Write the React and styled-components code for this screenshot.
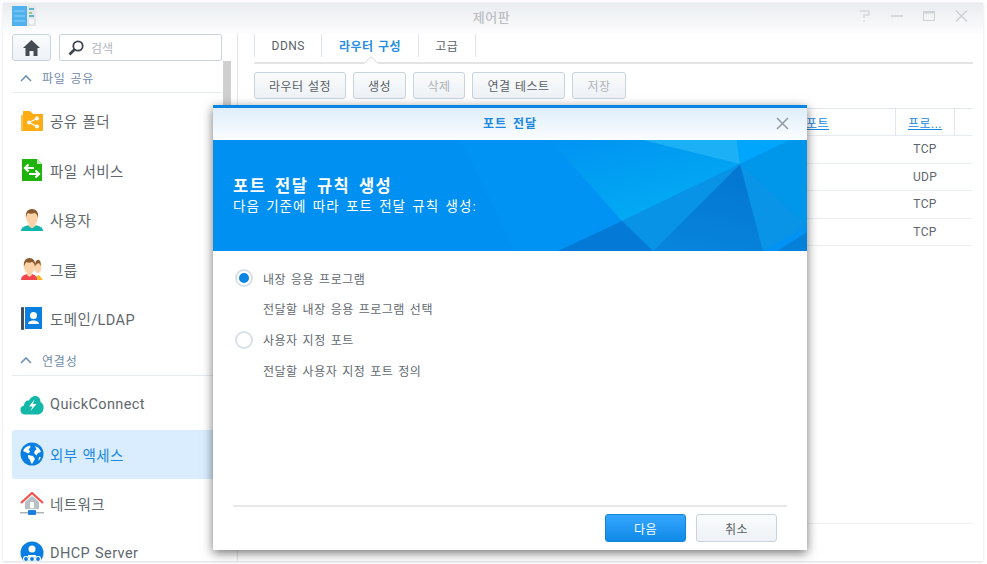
import styled, { createGlobalStyle } from "styled-components";

const GlobalStyle = createGlobalStyle`
  html, body {
    margin: 0;
    padding: 0;
    background: #fff;
  }
  * {
    box-sizing: border-box;
  }
  body {
    font-family: Roboto, "Noto Sans CJK KR", sans-serif;
  }
`;

const FolderIcon = () => (
  <svg width="24" height="22" viewBox="0 0 24 22">
    <path d="M1 5h2v16H1z" fill="#fbc04a" />
    <path d="M3 1h7l3 3h10v16a1 1 0 0 1-1 1H3z" fill="#fdad14" />
    <circle cx="9" cy="12.5" r="2" fill="#fff" />
    <circle cx="17" cy="8.5" r="2" fill="#fff" />
    <circle cx="17" cy="16.5" r="2" fill="#fff" />
    <path d="M9 12.5l8-4M9 12.5l8 4" stroke="#fff" strokeWidth="1.3" />
  </svg>
);

const FileIcon = () => (
  <svg width="24" height="22" viewBox="0 0 24 22">
    <path d="M2 0h15l5 5v17H2z" fill="#1eb30d" />
    <path d="M17 0l5 5h-5z" fill="#c7ecc2" />
    <path d="M5 9h9M8.5 5.5L5 9l3.5 3.5" fill="none" stroke="#fff" strokeWidth="2.2" />
    <path d="M9 15h10M15.500 11.500L19 15l-3.500 3.500" fill="none" stroke="#fff" strokeWidth="2.2" />
  </svg>
);

const UserIcon = () => (
  <svg width="24" height="24" viewBox="0 0 24 24">
    <path d="M1 23c0-4 4-5 8-6h6c4 1 8 2 8 6z" fill="#12b4ab" />
    <path d="M8.500 14h7v4l-3.500 2.500L8.500 18z" fill="#fcd3a8" />
    <ellipse cx="12" cy="9.500" rx="6" ry="7.500" fill="#fcd3a8" />
    <path d="M6 10C5 4 8 1 12 1s7 3 6 9c-.5-3-2-4.500-3.500-5-2 1-5.500 1-6.500 0-1 1-1.700 2.500-2 5z" fill="#8b5a2e" />
  </svg>
);

const GroupIcon = () => (
  <svg width="24" height="24" viewBox="0 0 24 24">
    <path d="M14 23c1-3 3-4 5-5l4 5z" fill="#fdb52c" />
    <ellipse cx="18" cy="10" rx="3.500" ry="6" fill="#fcd3a8" />
    <path d="M15 9c0-5 2-7 4-6 2 1 2 4 1.500 6-.5-1.500-1-2.500-2-3-1 .5-2.500 1.500-3.500 3z" fill="#8b5a2e" />
    <path d="M1 23c0-4 3-5 6-6h5c3 1 5 2 5 6z" fill="#f2454d" />
    <path d="M7 14h5v4l-2.500 2L7 18z" fill="#fcd3a8" />
    <ellipse cx="9.500" cy="9.500" rx="5.500" ry="7.500" fill="#fcd3a8" />
    <path d="M4 10C3 4 6 1 9.500 1S16 4 15 10c-.5-3-1.500-4.500-3-5-2 1-4 1-5.500 0-1 1-2 2.500-2.500 5z" fill="#8b5a2e" />
  </svg>
);

const DomainIcon = () => (
  <svg width="24" height="23" viewBox="0 0 24 23">
    <rect x="1" y="0" width="3" height="23" rx="1" fill="#454e59" />
    <rect x="5" y="0" width="17" height="22" fill="#0a7fdf" />
    <circle cx="13.500" cy="8.500" r="3.500" fill="#fff" />
    <path d="M8 17c0-2.500 2.500-3 4-3.500h3c1.500.5 4 1 4 3.500z" fill="#fff" />
  </svg>
);

const CloudIcon = () => (
  <svg width="24" height="20" viewBox="0 0 24 20">
    <path
      d="M5 19.500a4.500 4.500 0 0 1-1-8.900C4.500 6 7 5 9 5.500 10.500 2 13.500.5 16 1c3 .5 4.500 3 4.500 6 2.500 1.500 3.500 4 3 7-.5 3-3 5.500-6 5.500z"
      fill="#14b8a9"
    />
    <path d="M14.500 4.500L9 11.500h3.500L10.500 16l6-7h-3.500z" fill="#fff" />
  </svg>
);

const GlobeIcon = () => (
  <svg width="24" height="24" viewBox="0 0 24 24">
    <circle cx="12" cy="12" r="11.500" fill="#0a7fe3" />
    <path d="M3 9c1-3 4-5 7-5.500 1 1.500 0 3-1.500 3.500L10 9.500l-1.500 2L5 10z" fill="#fff" />
    <path d="M8 13l5 1 2 3-3 5c-1.500-1-1.500-3-2-4-1.500-1-2-3-2-5z" fill="#fff" />
    <path d="M15 4c3 1 5 3 6 6l-3 1-1.500 2.500L14 11l1-2.500 1.500-1z" fill="#fff" />
    <path d="M19 15l2 .5-2.500 3.500z" fill="#fff" />
  </svg>
);

const NetworkIcon = () => (
  <svg width="24" height="24" viewBox="0 0 24 24">
    <path d="M5 10l7-6 7 6v7H5z" fill="#b7bfc7" />
    <path d="M1 11l11-10 11 10" fill="none" stroke="#f4504e" strokeWidth="2.200" />
    <rect x="10" y="10" width="4" height="6" fill="#fff" />
    <rect x="0" y="20" width="24" height="1.500" fill="#aab4bd" />
    <rect x="8" y="18" width="8" height="5" rx="1" fill="#1a7fdc" />
  </svg>
);

const DhcpIcon = () => (
  <svg width="24" height="24" viewBox="0 0 24 24">
    <circle cx="12" cy="12" r="11.500" fill="#0a7fe3" />
    <circle cx="12" cy="8" r="3.500" fill="#fff" />
    <path d="M8 14h8v2H8z" fill="#fff" />
    <circle cx="6" cy="18" r="2.500" fill="none" stroke="#fff" strokeWidth="1.200" />
    <circle cx="12" cy="18" r="2.500" fill="none" stroke="#fff" strokeWidth="1.200" />
    <circle cx="18" cy="18" r="2.500" fill="none" stroke="#fff" strokeWidth="1.200" />
  </svg>
);

const Chevron = () => (
  <svg width="12" height="8" viewBox="0 0 12 8">
    <path d="M1 7l5-5 5 5" fill="none" stroke="#6f93b3" strokeWidth="1.600" />
  </svg>
);

const sections = [
  {
    title: "파일 공유",
    pad: 3,
    items: [
      { label: "공유 폴더", icon: <FolderIcon /> },
      { label: "파일 서비스", icon: <FileIcon /> },
      { label: "사용자", icon: <UserIcon /> },
      { label: "그룹", icon: <GroupIcon /> },
      { label: "도메인/LDAP", icon: <DomainIcon /> },
    ],
  },
  {
    title: "연결성",
    pad: 4.5,
    items: [
      { label: "QuickConnect", icon: <CloudIcon /> },
      { label: "외부 액세스", icon: <GlobeIcon />, active: true },
      { label: "네트워크", icon: <NetworkIcon /> },
      { label: "DHCP Server", icon: <DhcpIcon /> },
    ],
  },
];

const toolbarButtons = [
  { label: "라우터 설정", width: 92 },
  { label: "생성", width: 53 },
  { label: "삭제", width: 52, disabled: true },
  { label: "연결 테스트", width: 93 },
  { label: "저장", width: 54, disabled: true },
];

const protocols = ["TCP", "UDP", "TCP", "TCP"];

const App = () => {
  return (
    <Page>
      <GlobalStyle />
      <Window>
        <TitleBar>
          <Logo>
            <svg width="24" height="20" viewBox="0 0 24 20">
              <rect width="15" height="20" fill="#4fb2ef" />
              <path d="M2 5h11M2 10h11M2 15h11" stroke="#8fd0f7" strokeWidth="1" />
              <rect x="15" width="9" height="20" fill="#e3e7e9" />
              <path d="M17 3h5" stroke="#3aa0c8" strokeWidth="1.500" />
              <path d="M17 7h3" stroke="#7cc04b" strokeWidth="1.500" />
              <path d="M17 10h5" stroke="#3aa0c8" strokeWidth="1.500" />
              <circle cx="19.500" cy="15.500" r="2.500" fill="#f6f8f9" />
            </svg>
          </Logo>
          <WindowTitle>제어판</WindowTitle>
          <WindowControls>
            <svg width="12" height="14" viewBox="0 0 12 14">
              <path d="M1 2h9v4H5v3M5 11.500v1.500" fill="none" stroke="#d3d7db" strokeWidth="1.500" />
            </svg>
            <svg width="12" height="14" viewBox="0 0 12 14">
              <path d="M0 7h12" stroke="#cdd2d6" strokeWidth="1.600" />
            </svg>
            <svg width="12" height="14" viewBox="0 0 12 14">
              <path d="M.5 2.500h11v9H.5z" fill="none" stroke="#cdd2d6" strokeWidth="1.200" />
              <path d="M.5 3.500h11" stroke="#cdd2d6" strokeWidth="2" />
            </svg>
            <svg width="13" height="14" viewBox="0 0 13 14">
              <path d="M1 1.500l11 11M12 1.500l-11 11" stroke="#cdd2d6" strokeWidth="1.500" />
            </svg>
          </WindowControls>
        </TitleBar>
        <Body>
          <Sidebar>
            <SidebarInner>
              <SearchRow>
                <HomeButton>
                  <svg width="17" height="16" viewBox="0 0 17 16">
                    <path d="M8.500 0L0 8h2.500v8h4v-5h4v5h4V8H17z" fill="#444b52" />
                  </svg>
                </HomeButton>
                <SearchBox>
                  <svg width="16" height="16" viewBox="0 0 16 16">
                    <circle cx="10" cy="6" r="4.700" fill="none" stroke="#3d444b" strokeWidth="1.800" />
                    <path d="M6.500 9.500L1.500 14.500" stroke="#3d444b" strokeWidth="2.600" />
                  </svg>
                  <SearchText>검색</SearchText>
                </SearchBox>
              </SearchRow>
              {sections.map((section) => (
                <div key={section.title}>
                  <SectionHeader>
                    <Chevron />
                    <SectionTitle>{section.title}</SectionTitle>
                  </SectionHeader>
                  <ItemList $pad={section.pad}>
                    {section.items.map((item) => (
                      <Item key={item.label} $active={item.active}>
                        <ItemIcon>{item.icon}</ItemIcon>
                        <ItemLabel>{item.label}</ItemLabel>
                      </Item>
                    ))}
                  </ItemList>
                </div>
              ))}
            </SidebarInner>
            <ScrollThumb />
          </Sidebar>
          <Content>
            <Tabs>
              <Tab>DDNS</Tab>
              <Tab $active>라우터 구성</Tab>
              <Tab>고급</Tab>
            </Tabs>
            <Toolbar>
              {toolbarButtons.map((btn) => (
                <ToolButton key={btn.label} $width={btn.width} $disabled={btn.disabled}>
                  {btn.label}
                </ToolButton>
              ))}
            </Toolbar>
            <Table>
              <HeadCell />
              <HeadCell $pad>
                <HeadLink>포트</HeadLink>
              </HeadCell>
              <HeadCell $divider $center>
                <HeadLink>프로...</HeadLink>
              </HeadCell>
              <HeadCell />
              {protocols.map((proto, i) => (
                <TableRow key={i}>
                  <span />
                  <span />
                  <ProtoCell>{proto}</ProtoCell>
                  <span />
                </TableRow>
              ))}
            </Table>
            <Pager />
          </Content>
        </Body>
      </Window>

      <Modal>
        <ModalTitleBar>
          <ModalTitle>포트 전달</ModalTitle>
          <ModalClose>
            <svg width="13" height="13" viewBox="0 0 13 13">
              <path d="M1 1l11 11M12 1L1 12" stroke="#8f9aa3" strokeWidth="1.500" />
            </svg>
          </ModalClose>
        </ModalTitleBar>
        <Banner>
          <BannerArt viewBox="0 0 594 111" preserveAspectRatio="none">
            <defs>
              <linearGradient id="facet" x1="0.1" y1="0" x2="0.65" y2="1">
                <stop offset="0" stopColor="#0094f2" />
                <stop offset="1" stopColor="#03adf3" />
              </linearGradient>
              <linearGradient id="dark" x1="0.7" y1="0" x2="0.4" y2="1">
                <stop offset="0" stopColor="#0376d0" />
                <stop offset="1" stopColor="#0784dc" />
              </linearGradient>
            </defs>
            <rect width="594" height="111" fill="#0093f3" />
            <path d="M0 0h247l55 111H0z" fill="#0090f1" />
            <path d="M337 0h187l3 24-118 57z" fill="url(#facet)" />
            <path d="M430 0h94l3 24z" fill="#1cb0f6" />
            <path d="M524 0h53l-50 24z" fill="#00a6fb" />
            <path d="M577 0h17v86L527 24z" fill="#0096ea" />
            <path d="M527 24l67 62-44 25z" fill="#0a94e7" />
            <path d="M527 24l23 87H440z" fill="url(#dark)" />
            <path d="M527 24L440 111 409 81z" fill="#0893e6" />
            <path d="M409 81l31 30H345z" fill="#0479d6" />
            <path d="M594 92v19h-30z" fill="#0580d9" />
          </BannerArt>
          <BannerTitle>포트 전달 규칙 생성</BannerTitle>
          <BannerSub>다음 기준에 따라 포트 전달 규칙 생성:</BannerSub>
        </Banner>
        <ModalBody>
          <OptionRow>
            <Radio $checked />
            <OptionText>내장 응용 프로그램</OptionText>
          </OptionRow>
          <OptionDesc>전달할 내장 응용 프로그램 선택</OptionDesc>
          <OptionRow>
            <Radio />
            <OptionText>사용자 지정 포트</OptionText>
          </OptionRow>
          <OptionDesc>전달할 사용자 지정 포트 정의</OptionDesc>
        </ModalBody>
        <ModalFooter>
          <PrimaryButton>다음</PrimaryButton>
          <CancelButton>취소</CancelButton>
        </ModalFooter>
      </Modal>
    </Page>
  );
};

const Page = styled.div`
  position: relative;
  width: 987px;
  height: 564px;
  padding: 3px 4px 2px 3px;
  overflow: hidden;
  background: #fff;
`;

const Window = styled.div`
  display: flex;
  flex-direction: column;
  height: 100%;
  overflow: hidden;
  background: #fff;
  border-bottom: 1px solid #e2e8ee;
  box-shadow: 0 0 3px rgba(0, 0, 0, 0.12);
`;

const TitleBar = styled.div`
  position: relative;
  display: flex;
  flex: 0 0 31px;
  align-items: center;
  padding: 0 15px 6px 9px;
  background: linear-gradient(#e9ecef, #fdfdfe);
`;

const Logo = styled.div`
  display: flex;
`;

const WindowTitle = styled.div`
  position: absolute;
  left: 0;
  right: 0;
  top: 4px;
  padding-right: 3px;
  text-align: center;
  font-size: 13px;
  font-weight: 500;
  letter-spacing: 0.5px;
  color: #bcc0c4;
`;

const WindowControls = styled.div`
  display: flex;
  gap: 20px;
  margin-left: auto;
`;

const Body = styled.div`
  display: flex;
  flex: 1;
  min-height: 0;
`;

const Sidebar = styled.div`
  display: flex;
  flex: 0 0 235px;
  padding-left: 9px;
  overflow: hidden;
  border-right: 1px solid #e1e6eb;
`;

const SidebarInner = styled.div`
  flex: 0 0 210px;
`;

const ScrollThumb = styled.div`
  flex: 0 0 8px;
  height: 200px;
  margin: 27px 0 0 1px;
  background: #cfcfcf;
`;

const SearchRow = styled.div`
  display: flex;
  gap: 8px;
  height: 27px;
`;

const HomeButton = styled.div`
  display: flex;
  flex: 0 0 39px;
  align-items: center;
  justify-content: center;
  background: linear-gradient(#fafbfc, #eef2f6);
  border: 1px solid #c8d3de;
  border-radius: 3px;
`;

const SearchBox = styled.div`
  display: flex;
  flex: 1;
  align-items: center;
  gap: 7px;
  padding-left: 8px;
  background: #fff;
  border: 1px solid #ccd5df;
  border-radius: 2px;
`;

const SearchText = styled.span`
  font-size: 12px;
  color: #b2b7bc;
`;

const SectionHeader = styled.div`
  display: flex;
  align-items: center;
  height: 32px;
  padding: 2px 0 0 8px;
  border-bottom: 1px solid #e6ebf0;
`;

const SectionTitle = styled.span`
  margin-left: 10px;
  font-size: 12px;
  letter-spacing: 0.8px;
  word-spacing: 1px;
  color: #6f8ca8;
`;

const ItemList = styled.div`
  padding-top: ${(p) => p.$pad}px;
`;

const Item = styled.div`
  display: flex;
  align-items: center;
  height: 49.500px;
  padding-left: 8px;
  border-radius: 3px;
  background: ${(p) => (p.$active ? "#d9edfe" : "transparent")};
  color: ${(p) => (p.$active ? "#1a87e0" : "#60676e")};
`;

const ItemIcon = styled.div`
  display: flex;
  flex: 0 0 30px;
  align-items: center;
`;

const ItemLabel = styled.span`
  font-size: 14.500px;
  letter-spacing: 0.4px;
  word-spacing: 1px;
`;

const Content = styled.div`
  display: flex;
  flex: 1;
  flex-direction: column;
  min-width: 0;
  padding: 0 10px 0 16px;
`;

const Tabs = styled.div`
  display: flex;
  flex: 0 0 30px;
  padding-bottom: 5px;
  border-bottom: 2px solid #e4e4e4;
`;

const Tab = styled.div`
  position: relative;
  display: flex;
  align-items: center;
  height: 23px;
  padding: 0 16.500px;
  font-size: 12px;
  font-weight: ${(p) => (p.$active ? 700 : 400)};
  letter-spacing: 0.5px;
  word-spacing: 1px;
  color: ${(p) => (p.$active ? "#2a8fe2" : "#5a6168")};
  border-right: 1px solid #dde4eb;
  &:first-child {
    border-left: 1px solid #dde4eb;
  }
  ${(p) =>
    p.$active &&
    `
    &::after {
      content: "";
      position: absolute;
      left: 50%;
      top: 24px;
      width: 9px;
      height: 9px;
      margin-left: -4px;
      background: #fff;
      border-left: 1px solid #e4e4e4;
      border-top: 1px solid #e4e4e4;
      transform: rotate(45deg);
    }
  `}
`;

const Toolbar = styled.div`
  display: flex;
  gap: 7px;
  flex: 0 0 27px;
  margin-top: 8px;
`;

const ToolButton = styled.div`
  display: flex;
  flex: 0 0 ${(p) => p.$width}px;
  align-items: center;
  justify-content: center;
  font-size: 12px;
  letter-spacing: 0.5px;
  word-spacing: 1px;
  color: ${(p) => (p.$disabled ? "#aeb3b8" : "#5a6168")};
  background: linear-gradient(#fafbfc, #eef2f6);
  border: 1px solid #c9d3de;
  border-radius: 3px;
`;

const Table = styled.div`
  display: grid;
  grid-template-columns: 541px 100px 60px 17px;
  grid-template-rows: 27px;
  grid-auto-rows: 27.500px;
  margin-top: 9px;
  border-top: 1px solid #dfe7ef;
`;

const HeadCell = styled.div`
  display: flex;
  align-items: center;
  justify-content: ${(p) => (p.$center ? "center" : "flex-start")};
  padding-left: ${(p) => (p.$pad ? "11px" : "0")};
  border-bottom: 1px solid #e6ecf2;
  border-left: ${(p) => (p.$divider ? "1px solid #e0e7ee" : "none")};
  border-right: ${(p) => (p.$divider ? "1px solid #e0e7ee" : "none")};
`;

const HeadLink = styled.span`
  font-size: 12px;
  letter-spacing: 0.5px;
  color: #1a87e0;
  text-decoration: underline;
`;

const TableRow = styled.div`
  display: grid;
  grid-column: 1 / -1;
  grid-template-columns: subgrid;
  align-items: center;
  border-bottom: 1px solid #e9eef4;
`;

const ProtoCell = styled.span`
  text-align: center;
  font-size: 12px;
  letter-spacing: 0.3px;
  color: #5f666d;
`;

const Pager = styled.div`
  flex: 0 0 38px;
  margin-top: auto;
  border-top: 1px solid #eef1f5;
`;

const Modal = styled.div`
  position: absolute;
  left: 213px;
  top: 105px;
  display: flex;
  flex-direction: column;
  width: 594px;
  height: 445px;
  background: #fff;
  border-top: 3px solid #0a85e2;
  box-shadow: 0 3px 10px rgba(0, 0, 0, 0.55);
`;

const ModalTitleBar = styled.div`
  position: relative;
  display: flex;
  flex: 0 0 32px;
  align-items: center;
  justify-content: center;
  padding-bottom: 3px;
  background: linear-gradient(#deeefb, #fbfdfe);
`;

const ModalTitle = styled.div`
  font-size: 12px;
  font-weight: 700;
  letter-spacing: 1px;
  word-spacing: 2px;
  color: #1a87e0;
`;

const ModalClose = styled.div`
  position: absolute;
  right: 18px;
  top: 9px;
  display: flex;
`;

const Banner = styled.div`
  position: relative;
  display: flex;
  flex: 0 0 111px;
  flex-direction: column;
  justify-content: center;
  padding: 0 20px;
  overflow: hidden;
  color: #fff;
`;

const BannerArt = styled.svg`
  position: absolute;
  left: 0;
  top: 0;
  width: 100%;
  height: 100%;
`;

const BannerTitle = styled.div`
  position: relative;
  font-size: 16.500px;
  font-weight: 700;
  line-height: 20px;
  letter-spacing: 1.500px;
  word-spacing: 3px;
`;

const BannerSub = styled.div`
  position: relative;
  font-size: 13.500px;
  line-height: 18px;
  letter-spacing: 1px;
  word-spacing: 2px;
`;

const ModalBody = styled.div`
  flex: 1;
  padding: 16px 22px 0;
`;

const OptionRow = styled.div`
  display: flex;
  align-items: center;
  height: 22px;
`;

const Radio = styled.span`
  position: relative;
  flex: 0 0 18px;
  height: 18px;
  margin-right: 10px;
  background: #fff;
  border: 2px solid #d9e0e8;
  border-radius: 50%;
  ${(p) =>
    p.$checked &&
    `
    &::after {
      content: "";
      position: absolute;
      inset: 2px;
      background: #0a85e2;
      border-radius: 50%;
    }
  `}
`;

const OptionText = styled.span`
  font-size: 12px;
  letter-spacing: 0.5px;
  word-spacing: 1.500px;
  color: #62696f;
`;

const OptionDesc = styled(OptionText)`
  display: block;
  height: 39.500px;
  padding: 13px 0 0 28px;
  line-height: 16px;
`;

const ModalFooter = styled.div`
  display: flex;
  flex: 0 0 45px;
  justify-content: flex-end;
  gap: 10px;
  margin: 0 20px;
  padding: 7px 10px 0 0;
  border-top: 2px solid #e8e8e8;
`;

const FooterButton = styled.div`
  display: flex;
  flex: 0 0 81px;
  align-items: center;
  justify-content: center;
  height: 28px;
  font-size: 12px;
  letter-spacing: 0.5px;
  border-radius: 3px;
`;

const PrimaryButton = styled(FooterButton)`
  color: #fff;
  background: linear-gradient(#36a6ff, #0f8ae6);
  border: 1px solid #1383d8;
`;

const CancelButton = styled(FooterButton)`
  color: #5a6168;
  background: linear-gradient(#fafbfc, #eef2f6);
  border: 1px solid #c9d3de;
`;

export default App;
